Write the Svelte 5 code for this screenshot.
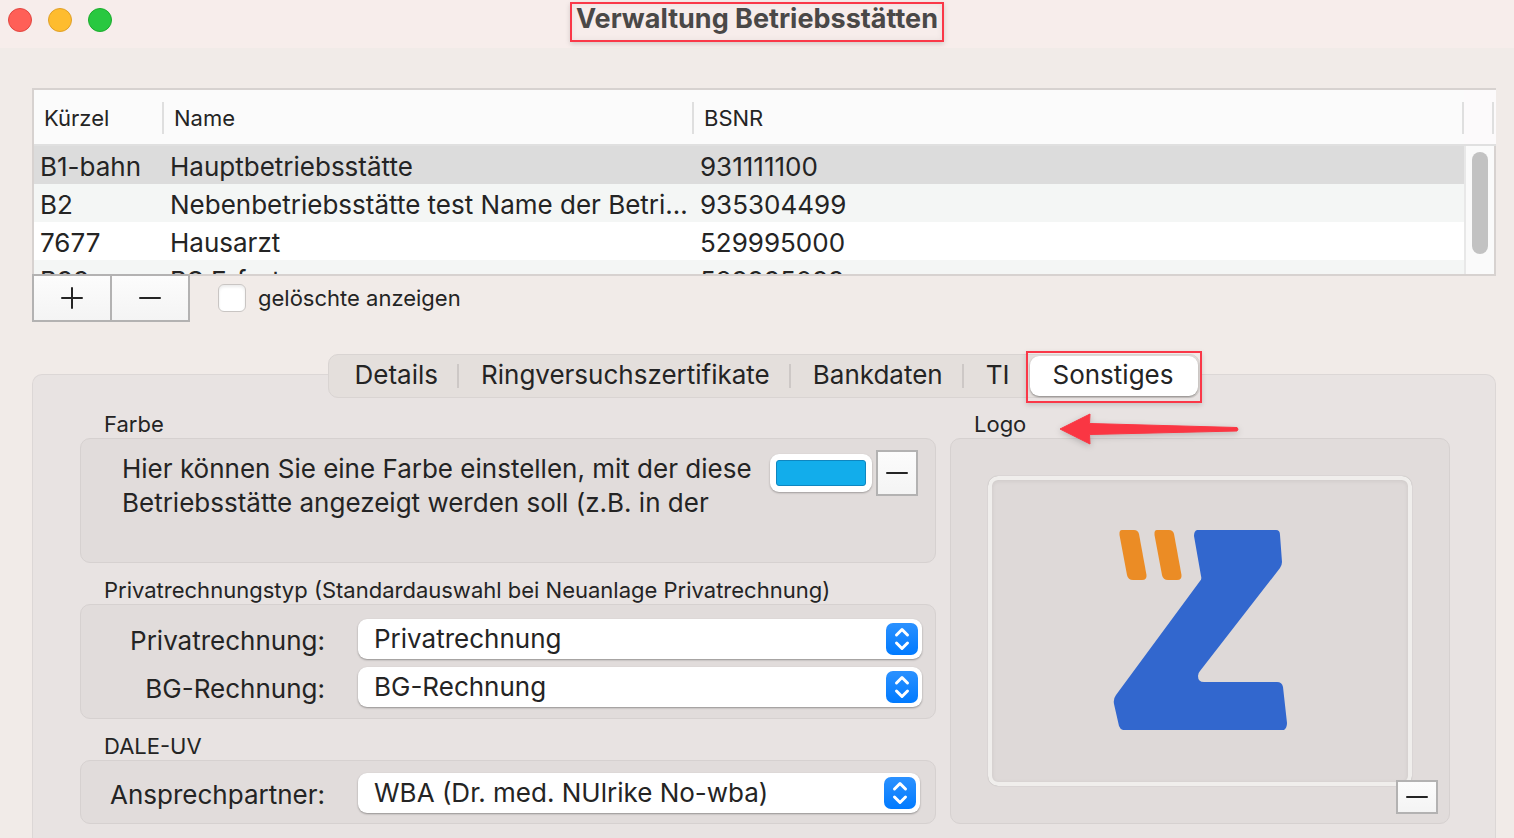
<script>
  let sites = [
    { code: 'B1-bahn', name: 'Hauptbetriebsstätte', bsnr: '931111100' },
    { code: 'B2', name: 'Nebenbetriebsstätte test Name der Betri…', bsnr: '935304499' },
    { code: '7677', name: 'Hausarzt', bsnr: '529995000' },
    { code: 'B99', name: 'BS Erfurt', bsnr: '529995099' }
  ];
  let tabs = ['Details', 'Ringversuchszertifikate', 'Bankdaten', 'TI', 'Sonstiges'];

  let selectedSite = 0;
  let activeTab = 'Sonstiges';
  let showDeleted = false;
  let color = '#12adeb';
</script>

{#snippet plus()}
  <svg class="sign" viewBox="0 0 22 22" aria-hidden="true"><path d="M1 11H21M11 1V21" /></svg>
{/snippet}

{#snippet minus()}
  <svg class="sign" viewBox="0 0 22 22" aria-hidden="true"><path d="M1 11H21" /></svg>
{/snippet}

{#snippet popup(id, value)}
  <div class="popup">
    <select {id}>
      <option>{value}</option>
    </select>
    <svg viewBox="0 0 32 32" aria-hidden="true">
      <defs>
        <linearGradient id="{id}-fill" x1="0" y1="0" x2="0" y2="1">
          <stop offset="0" stop-color="#2b91ff" />
          <stop offset="1" stop-color="#007aff" />
        </linearGradient>
      </defs>
      <rect width="32" height="32" rx="7" fill="url(#{id}-fill)" />
      <path d="M10.500 12L16 6.500L21.500 12M10.500 20L16 25.500L21.500 20" />
    </svg>
  </div>
{/snippet}

<div class="window">
  <header class="titlebar">
    <div class="lights">
      <button class="light close" aria-label="Schließen"></button>
      <button class="light minimize" aria-label="Minimieren"></button>
      <button class="light maximize" aria-label="Maximieren"></button>
    </div>
    <h1>Verwaltung Betriebsstätten</h1>
  </header>

  <main>
    <div class="list">
      <table>
        <thead>
          <tr>
            <th class="code"><span>Kürzel</span></th>
            <th class="name"><span>Name</span></th>
            <th><span>BSNR</span></th>
          </tr>
        </thead>
        <tbody>
          {#each sites as site, i}
            <tr class:selected={i === selectedSite} on:click={() => (selectedSite = i)}>
              <td>{site.code}</td>
              <td>{site.name}</td>
              <td>{site.bsnr}</td>
            </tr>
          {/each}
        </tbody>
      </table>
      <div class="scroller">
        <div class="corner"><span></span></div>
        <div class="track"><div class="thumb"></div></div>
      </div>
    </div>

    <div class="toolbar">
      <button class="square" aria-label="Hinzufügen">{@render plus()}</button>
      <button class="square" aria-label="Entfernen">{@render minus()}</button>
      <label class="check">
        <input type="checkbox" bind:checked={showDeleted} />
        gelöschte anzeigen
      </label>
    </div>

    <nav class="tabs">
      {#each tabs as tab}
        <button class:active={tab === activeTab} on:click={() => (activeTab = tab)}>{tab}</button>
      {/each}
    </nav>

    <div class="panel">
      <div class="column">
        <section>
          <h2><label for="color">Farbe</label></h2>
          <div class="box color-box">
            <p>
              Hier können Sie eine Farbe einstellen, mit der diese Betriebsstätte angezeigt werden soll (z.B. in der
            </p>
            <input id="color" type="color" bind:value={color} />
            <button class="square small" aria-label="Farbe entfernen">{@render minus()}</button>
          </div>
        </section>

        <section>
          <h2>Privatrechnungstyp (Standardauswahl bei Neuanlage Privatrechnung)</h2>
          <div class="box form">
            <label for="private">Privatrechnung:</label>
            {@render popup('private', 'Privatrechnung')}
            <label for="bg">BG-Rechnung:</label>
            {@render popup('bg', 'BG-Rechnung')}
          </div>
        </section>

        <section>
          <h2>DALE-UV</h2>
          <div class="box form single">
            <label for="contact">Ansprechpartner:</label>
            {@render popup('contact', 'WBA (Dr. med. NUlrike No-wba)')}
          </div>
        </section>
      </div>

      <section class="logo-section">
        <h2>Logo</h2>
        <svg class="arrow" viewBox="0 0 180 32" aria-hidden="true">
          <path d="M1 16L31 1L30.500 10.500L178 14.500Q180 16 178 18L30.500 21.500L31 31Z" />
        </svg>
        <div class="box logo-box">
          <div class="well">
            <svg class="logo" viewBox="0 0 174 200" role="img" aria-label="Logo">
              <g fill="#eb8c25">
                <path d="M9 0H21Q25 0 26 4L33.500 45Q34 50 29 50H20Q15 50 14 45L6.500 5Q6 0 9 0Z" />
                <path d="M44 0H56Q60 0 61 4L68.500 45Q69 50 64 50H55Q50 50 49 45L41.500 5Q41 0 44 0Z" />
              </g>
              <path
                fill="#3267ce"
                d="M84 0H163Q167 0 167 5L169 32Q169 35 167 38L87 141Q85 143 85 146Q85 152 91 152H164Q169 152 170 157L174 193Q174 198 171 200H10Q7 199 6 196L1 174Q0 169 3 165L87 51Q89 49 88 46L81 6Q81 1 84 0Z"
              />
            </svg>
          </div>
          <button class="square corner-button" aria-label="Logo entfernen">{@render minus()}</button>
        </div>
      </section>
    </div>
  </main>
</div>

<style>
  :global(body) {
    background: #f1ebe8;
  }

  .window {
    height: 100vh;
    min-height: 838px;
    overflow: hidden;
    display: flex;
    flex-direction: column;
    font-family: Inter, 'Liberation Sans', sans-serif;
    font-size: 26px;
    color: #242424;
  }

  .window * {
    box-sizing: border-box;
  }

  button,
  input,
  select {
    margin: 0;
    padding: 0;
    border: none;
    font: inherit;
    color: inherit;
  }

  .titlebar {
    display: grid;
    grid-template-columns: 1fr auto 1fr;
    align-items: start;
    height: 48px;
    flex: none;
    background: #f7edeb;
  }

  .lights {
    display: flex;
    gap: 16px;
    padding: 8px;
  }

  .light {
    width: 24px;
    height: 24px;
    border-radius: 50%;
  }

  .close {
    background: #ff5f57;
    border: 1px solid #e24640;
  }

  .minimize {
    background: #febc2e;
    border: 1px solid #e0a028;
  }

  .maximize {
    background: #28c840;
    border: 1px solid #1bac2c;
  }

  h1 {
    margin: 2px 0 0;
    padding: 0 4px 6px;
    border: 2px solid #fa3848;
    box-shadow: 0 2px 5px rgba(0, 0, 0, 0.15), inset 0 0 6px rgba(0, 0, 0, 0.06);
    font-size: 27px;
    line-height: 30px;
    color: #4a4847;
  }

  main {
    flex: 1;
    display: flex;
    flex-direction: column;
    padding: 40px 18px 0 32px;
  }

  .list {
    display: flex;
    flex: none;
    height: 188px;
    overflow: hidden;
    border: 2px solid #d7d2d0;
    border-right: none;
    background: #fff;
  }

  table {
    flex: 1;
    table-layout: fixed;
    border-spacing: 0;
  }

  th {
    height: 56px;
    padding: 2px 0 0;
    background: #fbfbfb;
    border-bottom: 2px solid #e0e0e0;
    text-align: left;
    font-size: 22px;
    font-weight: 400;
  }

  th span {
    display: block;
    padding-left: 10px;
    border-right: 2px solid #dfdfdf;
    line-height: 32px;
  }

  .code {
    width: 130px;
  }

  .name {
    width: 530px;
  }

  td {
    height: 38px;
    padding: 4px 0 0 6px;
    line-height: 34px;
    white-space: nowrap;
    overflow: hidden;
    text-overflow: ellipsis;
  }

  tbody tr:nth-child(even) {
    background: #f4f6f5;
  }

  tbody tr.selected {
    background: #dcdcdc;
  }

  .scroller {
    display: flex;
    flex-direction: column;
    width: 32px;
  }

  .corner {
    height: 56px;
    flex: none;
    padding: 12px 2px 10px 0;
    background: #fcfafb;
    border-bottom: 2px solid #e0e0e0;
  }

  .corner span {
    display: block;
    height: 32px;
    border-right: 2px solid #dfdfdf;
  }

  .track {
    flex: 1;
    padding: 6px;
    border-left: 2px solid #e8e8e8;
    border-right: 2px solid #d7d2d0;
    background: #fafafa;
  }

  .thumb {
    width: 16px;
    height: 102px;
    border-radius: 8px;
    background: #c2c2c2;
  }

  .toolbar {
    display: flex;
    align-items: center;
    margin-top: -2px;
  }

  .square {
    display: flex;
    align-items: center;
    justify-content: center;
    width: 80px;
    height: 48px;
    border: 2px solid #b3b2b2;
    background: linear-gradient(#fcfcfc, #f4f4f4);
  }

  .square + .square {
    margin-left: -2px;
  }

  .square.small {
    width: 42px;
    height: 46px;
  }

  .sign {
    width: 22px;
    height: 22px;
    fill: none;
    stroke: #242424;
    stroke-width: 2;
    stroke-linecap: round;
  }

  .check {
    display: flex;
    align-items: center;
    gap: 12px;
    margin-left: 28px;
    font-size: 22px;
  }

  .check input {
    appearance: none;
    width: 28px;
    height: 28px;
    border: 1px solid #c9c5c3;
    border-radius: 6px;
    background: #fff;
    box-shadow: inset 0 2px 3px rgba(0, 0, 0, 0.08);
  }

  .check input:checked {
    background: #007aff;
  }

  .tabs {
    align-self: center;
    z-index: 1;
    display: flex;
    align-items: center;
    height: 44px;
    margin: 32px 0 -24px;
    padding: 0 1px 0 4px;
    border: 1px solid #d9d4d2;
    border-radius: 10px;
    background: #e4dfdc;
  }

  .tabs button {
    position: relative;
    padding: 0 21px 2px 22px;
    background: none;
    line-height: 38px;
  }

  /* short divider between neighbouring tabs */
  .tabs button:not(.active):not(:nth-last-child(2))::after {
    content: '';
    position: absolute;
    top: 8px;
    right: 0;
    width: 2px;
    height: 24px;
    background: #cdc8c6;
  }

  .tabs .active {
    padding-right: 25px;
    border-radius: 9px;
    background: #fff;
    box-shadow: 0 1px 2px rgba(0, 0, 0, 0.4);
  }

  .tabs .active::before {
    content: '';
    position: absolute;
    inset: -5px -4px -7px;
    border: 2px solid #fa3848;
    box-shadow: 0 2px 5px rgba(0, 0, 0, 0.15);
  }

  .panel {
    flex: 1;
    display: grid;
    grid-template-columns: 1fr 500px;
    gap: 14px;
    padding: 35px 45px 0 47px;
    border: 1px solid #dcd7d6;
    border-bottom: none;
    border-radius: 10px 10px 0 0;
    background: #e8e3e2;
  }

  .column {
    display: flex;
    flex-direction: column;
    gap: 13px;
  }

  h2 {
    margin: 0;
    padding-left: 24px;
    font-size: 22px;
    font-weight: 400;
    line-height: 28px;
  }

  .box {
    border: 1px solid #d6d1d0;
    border-radius: 10px;
    background: #e1dcdb;
  }

  .color-box {
    display: flex;
    align-items: flex-start;
    height: 125px;
    padding: 11px 17px 0 41px;
  }

  .color-box p {
    flex: 1;
    margin: 2px 16px 0 0;
    line-height: 34px;
  }

  .color-box input {
    appearance: none;
    width: 102px;
    height: 38px;
    margin: 4px 4px 0 0;
    padding: 6px;
    border-radius: 9px;
    background: #fff;
    box-shadow: 0 1px 2px rgba(0, 0, 0, 0.3);
  }

  .color-box input::-webkit-color-swatch-wrapper {
    padding: 0;
  }

  .color-box input::-webkit-color-swatch {
    border: 1px solid #0f86c0;
    border-radius: 3px;
  }

  .form {
    display: grid;
    grid-template-columns: 244px 1fr;
    column-gap: 33px;
    row-gap: 8px;
    padding: 14px 13px 11px 0;
  }

  .form.single {
    padding: 12px 15px 10px 0;
  }

  .form label {
    padding-top: 4px;
    line-height: 36px;
    text-align: right;
  }

  .popup {
    position: relative;
  }

  .popup select {
    display: block;
    appearance: none;
    width: 100%;
    height: 40px;
    padding: 0 40px 2px 16px;
    border-radius: 9px;
    background: #fff;
    box-shadow: 0 1px 2px rgba(0, 0, 0, 0.35);
  }

  .popup svg {
    position: absolute;
    top: 4px;
    right: 4px;
    width: 32px;
    height: 32px;
    pointer-events: none;
  }

  .popup path {
    fill: none;
    stroke: #fff;
    stroke-width: 3;
    stroke-linecap: round;
    stroke-linejoin: round;
  }

  .logo-section {
    position: relative;
  }

  .arrow {
    position: absolute;
    top: 3px;
    left: 109px;
    z-index: 1;
    width: 180px;
    height: 32px;
    fill: #fa3643;
    stroke: #fa3643;
    stroke-linejoin: round;
    filter: drop-shadow(0 2px 3px rgba(0, 0, 0, 0.2));
    overflow: visible;
  }

  .logo-box {
    position: relative;
    height: 386px;
    padding: 37px;
  }

  .well {
    display: flex;
    justify-content: center;
    height: 310px;
    padding-top: 50px;
    border: 4px solid #f0eeec;
    border-radius: 10px;
    background: #ded9d8;
    box-shadow: 0 0 1px rgba(0, 0, 0, 0.3), inset 0 1px 4px rgba(0, 0, 0, 0.08);
  }

  .logo {
    width: 174px;
    height: 200px;
  }

  .corner-button {
    position: absolute;
    right: 11px;
    bottom: 9px;
    width: 42px;
    height: 34px;
  }
</style>
